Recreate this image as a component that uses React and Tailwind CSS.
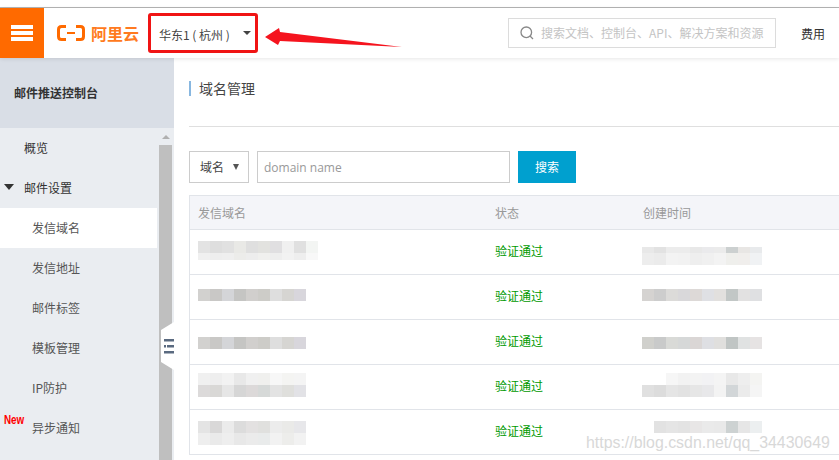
const cjk = 'font-["Microsoft_YaHei","Noto_Sans_CJK_SC","Liberation_Sans",sans-serif]';

const menu = [
  { label: "概览", top: true },
  { label: "邮件设置", top: true, open: true },
  { label: "发信域名", active: true },
  { label: "发信地址" },
  { label: "邮件标签" },
  { label: "模板管理" },
  { label: "IP防护" },
  { label: "异步通知", badge: true },
];

const rows = [
  {
    nameTop: 11,
    name: [
      ["#e3e3e3", "#dedede", "#e1e1e1", "#e9e9e6", "#dfdfdf", "#e2e2df", "#e0dfe1", "#f0f0f0", "#e0e0e0", "#f3f5f3"],
      ["#f0f0f0", "#eeeeee", "#efefef", "#ececea", "#ededed", "#f0f0ee", "#eeeeee", "#f2f2f2", "#eeeeee", "#f8f8f8"],
    ],
    nameH: [12, 7],
    timeTop: 17,
    time: [
      ["#e8e8e8", "#e2e2e2", "#ececec", "#ececec", "#e8e8e8", "#eaeaec", "#ebebeb", "#ccd0d0", "#e8e6e4", "#e8eaec"],
      ["#ededed", "#ebebeb", "#f3f3f3", "#f2f2f2", "#eeeeee", "#f0f0f0", "#f3f3f3", "#efefec", "#f0eeec", "#f0f2f4"],
    ],
    timeH: [6, 12],
  },
  {
    nameTop: 14,
    name: [["#d2d1cf", "#c9c8c6", "#d4d5d8", "#c5c5c3", "#d1cfcd", "#cdccc8", "#dedede", "#d6d5d2", "#d8d6dc"]],
    nameH: [12],
    timeTop: 14,
    time: [["#d5d3d1", "#cdcdcd", "#dcdbd9", "#d9d8da", "#ddd9d7", "#dfe0e4", "#e2e0de", "#c2c7c6", "#e2e1e1", "#dfe0e2"]],
    timeH: [12],
  },
  {
    nameTop: 17,
    name: [["#d2d1cf", "#c9c8c6", "#d4d5d8", "#c5c5c3", "#d1cfcd", "#cdccc8", "#dedede", "#d6d5d2", "#d8d6dc"]],
    nameH: [12],
    timeTop: 17,
    time: [["#d0d0cc", "#c9caca", "#d9dad7", "#d6d8d8", "#dad6d5", "#dedfe3", "#e0dfdd", "#c0c5c4", "#e0e2e2", "#e6e3e3"]],
    timeH: [12],
  },
  {
    nameTop: 8,
    name: [
      ["#f0f0f0", "#eeeeee", "#f2f2f2", "#e8e8e8", "#f0f0f0", "#f0f0ee", "#f7f7f7", "#f4f4f2", "#f4f4f4"],
      ["#dcdada", "#d9d8d6", "#e6e6e6", "#d6d6d6", "#dcd9d9", "#d6d9d8", "#e3e3e3", "#dfdfdc", "#e2e2e6"],
    ],
    nameH: [12, 12],
    timeTop: 8,
    time: [
      ["#ffffff", "#ffffff", "#f6f6f6", "#f2f2f2", "#f3f3f3", "#f2f2f4", "#f4f4f4", "#e8e8e8", "#eeeeee", "#f4f4f2"],
      ["#e0e0e0", "#dcdcdc", "#e5e5e5", "#e2e2e2", "#e6e6e6", "#e8e8ea", "#f3f3f3", "#d2d6d8", "#ebebeb", "#f5f5f5"],
    ],
    timeH: [12, 12],
  },
  {
    nameTop: 11,
    name: [
      ["#e4e4e4", "#d9d8d8", "#ebebeb", "#dcdcdc", "#e3e1e1", "#e0e0de", "#ececec", "#eaeae8", "#e7e7ea"],
      ["#eeeeee", "#eaeaea", "#eeeeee", "#e8e8e8", "#ebebeb", "#e9ebeb", "#f2f2f2", "#ededeb", "#f2f2f2"],
    ],
    nameH: [12, 12],
    timeTop: 11,
    time: [
      ["#ffffff", "#e2e2e2", "#e5e5e5", "#e3e3e3", "#e8e6e6", "#eaeaea", "#e9e9e9", "#cdd2d2", "#e6e6e6", "#eceff0"],
    ],
    timeH: [12],
  },
];

function Mosaic({ lines, heights, top }) {
  return (
    <div className="flex flex-col self-start" style={{ marginTop: top }}>
      {lines.map((line, i) => (
        <div key={i} className="flex" style={{ height: heights[i] }}>
          {line.map((c, j) => (
            <div key={j} className="w-3 h-full" style={{ background: c }} />
          ))}
        </div>
      ))}
    </div>
  );
}

function Sidebar() {
  return (
    <aside className="w-[174px] shrink-0 flex flex-col relative bg-[#eaedf1]">
      <div className="h-[70px] bg-[#d9dee6] flex items-center pl-[14px] text-xs font-bold text-[#333]">
        邮件推送控制台
      </div>
      <div className="flex flex-1 min-h-0">
        <nav className="w-[157px] shrink-0">
          {menu.map((m) => (
            <div
              key={m.label}
              className={`h-10 flex items-center relative text-xs ${m.top ? "pl-6 text-[#333]" : "pl-8 text-[#555]"} ${m.active ? "bg-white" : ""}`}
            >
              {m.open && (
                <span className="absolute left-1 top-4 w-0 h-0 border-x-[5px] border-x-transparent border-t-[6px] border-t-[#333]" />
              )}
              {m.badge && (
                <span className='absolute left-1 top-[5px] text-[12px] leading-[14px] font-bold text-[#f00] scale-x-[0.82] origin-left font-["Liberation_Sans",sans-serif]'>
                  New
                </span>
              )}
              {m.label}
            </div>
          ))}
        </nav>
        <div className="w-[2px]" />
        <div className="w-[13px] flex flex-col">
          <div className="h-[17px] flex items-center justify-center bg-[#eaedf1]">
            <span className="w-0 h-0 border-x-[4px] border-x-transparent border-b-[4px] border-b-[#b0b0b0]" />
          </div>
          <div className="flex-1 bg-[#bfbfbf]" />
        </div>
        <div className="w-[2px]" />
      </div>
      <svg className="absolute left-[161px] top-[264px]" width="13" height="48" viewBox="0 0 13 48">
        <path d="M0 8 L13 0 V48 L0 40 Z" fill="#fff" />
        <rect x="3" y="17" width="10" height="2.5" fill="#5a6a80" />
        <rect x="6" y="23" width="7" height="2.5" fill="#5a6a80" />
        <rect x="3" y="23" width="2" height="2.5" fill="#5a6a80" />
        <rect x="3" y="29" width="10" height="2.5" fill="#5a6a80" />
      </svg>
    </aside>
  );
}

function Header() {
  return (
    <header className="h-[50px] shrink-0 flex items-center bg-white relative z-10 shadow-[0_1px_4px_rgba(0,0,0,0.1)]">
      <div className="w-11 h-full bg-[#ff6a00] flex flex-col items-center justify-center gap-[2px]">
        <span className="w-[22px] h-1 bg-white" />
        <span className="w-[22px] h-1 bg-white" />
        <span className="w-[22px] h-1 bg-white" />
      </div>
      <div className="ml-[13px] flex items-center gap-[6px]">
        <svg width="28" height="16" viewBox="0 0 28 16" fill="none">
          <path d="M9 1.5 H4.5 Q1.5 1.5 1.5 4.5 V11.5 Q1.5 14.5 4.5 14.5 H9" stroke="#ff6a00" strokeWidth="3" />
          <path d="M19 1.5 H23.5 Q26.5 1.5 26.5 4.5 V11.5 Q26.5 14.5 23.5 14.5 H19" stroke="#ff6a00" strokeWidth="3" />
          <rect x="10" y="7" width="8" height="2" fill="#ff6a00" />
        </svg>
        <span className="text-[16px] leading-none font-bold text-[#ff7a20]">阿里云</span>
      </div>
      <div className="ml-5 pt-[3px] text-xs text-[#444] flex items-center whitespace-pre w-[92px]">
        <span className="w-[84px]">华东1 ( 杭州 )</span>
        <span className="-mt-[3px] w-0 h-0 border-x-[4px] border-x-transparent border-t-[4px] border-t-[#444]" />
      </div>
      <div className="ml-auto flex items-center">
        <div className="w-[268px] h-[30px] border border-[#dcdcdc] flex items-center pl-[11px] text-xs text-[#c4c4c4] whitespace-nowrap">
          <svg width="14" height="14" viewBox="0 0 14 14" fill="none" stroke="#888" strokeWidth="1.3" className="mr-[7px] shrink-0">
            <circle cx="6.3" cy="6.3" r="5.3" />
            <path d="M10 10 L13 13" />
          </svg>
          搜索文档、控制台、API、解决方案和资源
        </div>
        <div className="w-[63px] pl-[25px] pt-[2px] text-xs text-[#333]">费用</div>
      </div>
    </header>
  );
}

export default function App() {
  return (
    <div className={`w-[839px] h-[460px] overflow-hidden relative bg-white flex flex-col ${cjk}`}>
      <div className="h-2 shrink-0 bg-white border-b border-[#b5b5b5]" />
      <Header />
      <div className="flex flex-1 min-h-0">
        <Sidebar />
        <main className="flex-1 min-w-0 pl-[15px]">
          <div className="h-[69px] border-b border-[#dfdfdf] flex items-start pt-[23px]">
            <div className="border-l-2 border-[#88b7e0] pl-2 h-[15px] flex items-center text-sm text-[#444]">
              <span className="-mt-[2px]">域名管理</span>
            </div>
          </div>
          <div className="mt-6 flex gap-2 h-8">
            <div className="w-[60px] border border-[#ccc] flex items-center justify-between pl-[10px] pr-[9px] text-xs text-[#444]">
              域名
              <span className="w-0 h-0 border-x-[3.5px] border-x-transparent border-t-[6px] border-t-[#555]" />
            </div>
            <div className='w-[253px] border border-[#ccc] flex items-center pl-[6px] pt-[1px] text-xs text-[#999] font-["Open_Sans",sans-serif]'>
              domain name
            </div>
            <button className="w-[58px] bg-[#00a0cf] text-white text-xs">搜索</button>
          </div>
          <div className="mt-3 border-l border-[#e1e4e9]">
            <div className="h-[35px] flex items-center bg-[#f4f5f9] border-y border-[#e1e4e9] text-xs text-[#999]">
              <div className="w-[305px] pl-2">发信域名</div>
              <div className="w-[148px]">状态</div>
              <div>创建时间</div>
            </div>
            {rows.map((r, i) => (
              <div key={i} className="h-[45px] flex items-center border-b border-[#e1e4e9] text-xs">
                <div className="w-[305px] pl-2 self-stretch flex">
                  <Mosaic lines={r.name} heights={r.nameH} top={r.nameTop} />
                </div>
                <div className="w-[147px] pb-[2px] text-[#090]">验证通过</div>
                <div className="self-stretch flex">
                  <Mosaic lines={r.time} heights={r.timeH} top={r.timeTop} />
                </div>
              </div>
            ))}
          </div>
        </main>
      </div>

      {/* annotation drawn on top of the screenshot */}
      <div className="absolute z-20 left-[148px] top-[13px] w-[110px] h-10 border-[3px] border-[#f01414] rounded-[3px]" />
      <svg className="absolute z-20 left-[262px] top-[25px]" width="144" height="26" viewBox="0 0 144 26">
        <path d="M3 12 L17 3 L18 7 L140 22 L18 16 L16 20 Z" fill="#f5141e" />
      </svg>
      <div className='absolute z-20 left-[586px] top-[431px] text-[15.9px] text-[#d8d8d8] font-["Liberation_Sans",sans-serif] whitespace-nowrap'>
        https://blog.csdn.net/qq_34430649
      </div>
    </div>
  );
}
